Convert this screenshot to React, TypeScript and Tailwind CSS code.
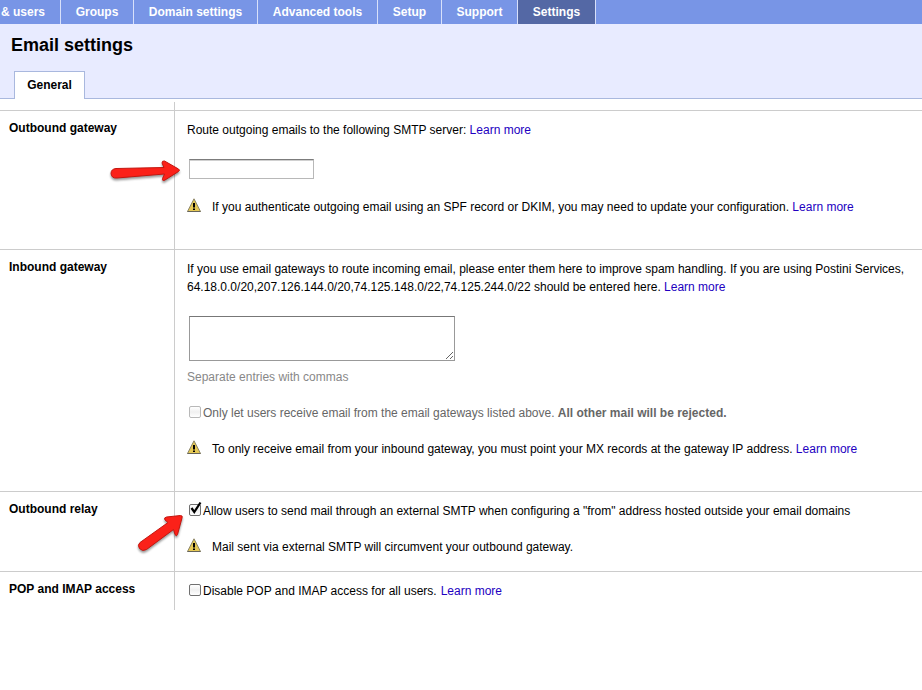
import type { ReactNode } from "react";

const navItems = [
  { label: "& users", width: "w-[61px] pr-[15px] justify-end" },
  { label: "Groups", width: "w-[73px] justify-center" },
  { label: "Domain settings", width: "w-[124px] justify-center" },
  { label: "Advanced tools", width: "w-[120px] justify-center" },
  { label: "Setup", width: "w-[64px] justify-center" },
  { label: "Support", width: "w-[76px] justify-center" },
  { label: "Settings", width: "w-[78px] justify-center bg-[#5468a5]", current: true },
];

function LearnMore() {
  return (
    <a href="#" className="text-[#2200c1]">
      Learn more
    </a>
  );
}

function WarningIcon() {
  return (
    <svg width="14" height="15" viewBox="0 0 14 15" className="mr-[11px] shrink-0" aria-hidden="true">
      <path d="M7 .8 13.5 13.5H.5Z" fill="#e6c955" stroke="#8a8468" strokeLinejoin="round" />
      <path d="M.5 13.500h13" stroke="#66645a" />
      <path d="M6 5h2v4.500H6zM6 10.500h2v1.500H6z" fill="#000" />
    </svg>
  );
}

function Warning({ children }: { children: ReactNode }) {
  return (
    <div className="flex items-start">
      <WarningIcon />
      <p>{children}</p>
    </div>
  );
}

function Row({ title, bottom, children }: { title: string; bottom: string; children: ReactNode }) {
  return (
    <section className="flex border-t border-[#cccccc]">
      <h2 className="w-[174px] shrink-0 pt-2 pl-[9px] font-bold">{title}</h2>
      <div className={`relative min-w-0 flex-1 border-l border-[#cccccc] pt-[10px] pl-3 ${bottom}`}>{children}</div>
    </section>
  );
}

function CheckOption({
  id,
  checked,
  disabled,
  children,
}: {
  id: string;
  checked?: boolean;
  disabled?: boolean;
  children: ReactNode;
}) {
  return (
    <div className={`flex items-start pl-[2px] ${disabled ? "text-[#666666]" : ""}`}>
      <span className="relative mt-[2px] mr-[2px] block h-3 w-3 shrink-0">
        <input
          id={id}
          type="checkbox"
          defaultChecked={checked}
          disabled={disabled}
          className={`block h-3 w-3 appearance-none rounded-[2px] border bg-linear-to-b from-white via-[#f0f0f0] to-white ${
            disabled ? "border-[#b8b8b8]" : "border-[#707070]"
          }`}
        />
        {checked && (
          <svg
            width="14"
            height="15"
            viewBox="0 0 14 15"
            className="pointer-events-none absolute -top-[3px] left-0"
            aria-hidden="true"
          >
            <path d="M2.500 7 5.300 11 11.500 1.500" fill="none" stroke="#000" strokeWidth="2.200" />
          </svg>
        )}
      </span>
      <label htmlFor={id}>{children}</label>
    </div>
  );
}

function Arrow({ className, outline }: { className: string; outline: string }) {
  return (
    <svg
      width="76"
      height="44"
      viewBox="0 0 76 44"
      className={`pointer-events-none absolute drop-shadow-[0_2px_1px_rgb(0_0_0/0.4)] ${className}`}
      aria-hidden="true"
    >
      <path d={outline} fill="#fb2119" stroke="#c3160f" strokeLinejoin="round" />
    </svg>
  );
}

export default function App() {
  return (
    <div className="bg-white font-['Liberation_Sans',Arial,sans-serif] text-[12px] leading-[18px] text-black">
      <nav className="flex h-6 overflow-hidden bg-[#7895e6] font-bold text-white">
        {navItems.map((item) => (
          <a
            key={item.label}
            href="#"
            aria-current={item.current ? "page" : undefined}
            className={`flex shrink-0 items-center border-r border-[#d8e0fa] whitespace-nowrap ${item.width}`}
          >
            {item.label}
          </a>
        ))}
      </nav>

      <header className="border-b border-[#a9b8de] bg-[#e8ebff] pt-2">
        <h1 className="pl-[11px] text-[18px] leading-[26px] font-bold">Email settings</h1>
        <div className="mt-[13px] -mb-px flex pl-[14px]" role="tablist">
          <button
            role="tab"
            aria-selected="true"
            className="h-7 w-[71px] border border-b-0 border-[#a9b8de] bg-white pb-[2px] text-center font-bold"
          >
            General
          </button>
        </div>
      </header>

      <main className="pt-[3px]">
        <div className="flex h-2">
          <div className="w-[174px] shrink-0" />
          <div className="border-l border-[#cccccc]" />
        </div>

        <Row title="Outbound gateway" bottom="pb-[33px]">
          <p>
            <label htmlFor="smtp">Route outgoing emails to the following SMTP server:</label> <LearnMore />
          </p>
          <input
            id="smtp"
            type="text"
            className="mt-5 mb-[19px] ml-[2px] block h-5 w-[125px] border border-[#b8b8b8] border-t-[#7c7c7c] px-1 shadow-[inset_0_1px_0_#d0d0d0] outline-none"
          />
          <Warning>
            If you authenticate outgoing email using an SPF record or DKIM, you may need to update your configuration.{" "}
            <LearnMore />
          </Warning>
          <Arrow
            className="top-[47px] -left-[67px]"
            outline="M8 10.500 56 9.500 54 5Q54 2.500 56.500 3L70.500 11Q72.500 12.300 70.500 13.500L57 22Q54 23.500 54.500 20.500L56.500 16 9 20Q3.500 20.500 3 15.500 3 11 8 10.500Z"
          />
        </Row>

        <Row title="Inbound gateway" bottom="pb-[33px]">
          <p>
            <label htmlFor="gateways">
              If you use email gateways to route incoming email, please enter them here to improve spam handling.
            </label>{" "}
            If you are using Postini Services, 64.18.0.0/20,207.126.144.0/20,74.125.148.0/22,74.125.244.0/22 should be
            entered here. <LearnMore />
          </p>
          <textarea
            id="gateways"
            className="mt-5 ml-[2px] block h-[45px] w-[266px] resize border border-[#999999] border-t-[#777777] p-1 outline-none"
          />
          <p className="mt-[7px] mb-[18px] text-[#888888]">Separate entries with commas</p>
          <CheckOption id="only-gateways" disabled>
            Only let users receive email from the email gateways listed above. <b>All other mail will be rejected.</b>
          </CheckOption>
          <div className="mt-[18px]">
            <Warning>
              To only receive email from your inbound gateway, you must point your MX records at the gateway IP address.{" "}
              <LearnMore />
            </Warning>
          </div>
        </Row>

        <Row title="Outbound relay" bottom="pb-[15px]">
          <CheckOption id="relay" checked>
            Allow users to send mail through an external SMTP when configuring a "from" address hosted outside your
            email domains
          </CheckOption>
          <div className="mt-[18px]">
            <Warning>Mail sent via external SMTP will circumvent your outbound gateway.</Warning>
          </div>
          <Arrow
            className="top-[20px] -left-[40px]"
            outline="M5 30.500 33 10.500 30 8Q28.500 5.500 31.500 5L45.500 3.500Q48 3.500 47 6L42.500 22.500Q41.500 25 40 22.500L38.500 17.500 11.500 37.500Q7.500 40 4.500 36.500 2 33 5 30.500Z"
          />
        </Row>

        <Row title="POP and IMAP access" bottom="pb-[10px]">
          <div className="flex">
            <CheckOption id="pop-imap">Disable POP and IMAP access for all users.</CheckOption>
            <span className="ml-1">
              <LearnMore />
            </span>
          </div>
        </Row>
      </main>
    </div>
  );
}
